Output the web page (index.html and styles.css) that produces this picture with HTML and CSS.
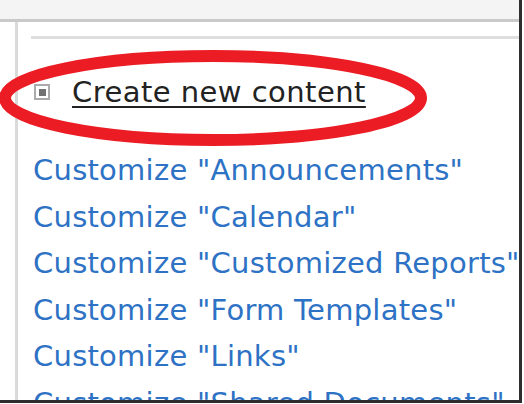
FILE: index.html
```html
<!DOCTYPE html>
<html>
<head lang="en">
    <meta charset="UTF-8">
    <title>Create new content</title>
    <link rel="stylesheet" href="styles.css">
</head>
<body>
<div class="shot">
    <div class="topbar"></div>
    <div class="main">
        <div class="rail"></div>
        <div class="content">
            <div class="rule"></div>
            <div class="heading">
                <span class="toggle"><span class="toggle-dot"></span></span>
                <a class="heading-link" href="#">Create new content</a>
            </div>
            <ul class="links">
                <li><a href="#">Customize "Announcements"</a></li>
                <li><a href="#">Customize "Calendar"</a></li>
                <li><a href="#">Customize "Customized Reports"</a></li>
                <li><a href="#">Customize "Form Templates"</a></li>
                <li><a href="#">Customize "Links"</a></li>
                <li><a href="#">Customize "Shared Documents"</a></li>
            </ul>
        </div>
    </div>
    <!--red mark drawn over the heading-->
    <svg class="mark" width="440" height="160" viewBox="0 0 440 160">
        <ellipse cx="213" cy="98" rx="208" ry="42" fill="none" stroke="#ec1c24" stroke-width="12"/>
    </svg>
</div>
</body>
</html>
```
FILE: styles.css
```css
html, body{
    margin: 0;
    padding: 0;
    background-color: #fff;
}
.shot{
    position: relative;
    width: 519px;
    height: 400px;
    overflow: hidden;
    background-color: #fff;
    border-right: 3px solid #2e2e2e;
    border-bottom: 3px solid #2e2e2e;
    font-family: "DejaVu Sans", Verdana, sans-serif;
}
.topbar{
    height: 19px;
    background-color: #f4f4f4;
    border-bottom: 3px solid #c9c9c9;
}
.main{
    display: flex;
    height: 378px;
}
.rail{
    width: 15px;
    flex: none;
    border-right: 3px solid #dadada;
}
.content{
    flex: 1;
    padding-left: 13px;
    min-width: 0;
}
.rule{
    height: 3px;
    margin-top: 14px;
    background-color: #dedede;
}
/*标题*/
.heading{
    display: flex;
    align-items: center;
    height: 40px;
    margin-top: 33px;
    line-height: 40px;
}
.toggle{
    display: flex;
    align-items: center;
    justify-content: center;
    width: 12px;
    height: 12px;
    margin-left: 3px;
    margin-top: 0;
    border: 2px solid #ababab;
    flex: none;
}
.toggle-dot{
    width: 7px;
    height: 7px;
    background-color: #727272;
}
.heading-link{
    margin-left: 22px;
    font-size: 29px;
    letter-spacing: 0.45px;
    color: #222;
    text-decoration: underline;
    text-decoration-thickness: 2px;
    text-underline-offset: 4px;
    white-space: nowrap;
}
/*链接列表*/
.links{
    list-style: none;
    margin: 35px 0 0 0;
    padding: 0 0 0 2px;
}
.links li{
    height: 46.5px;
    line-height: 46.5px;
    white-space: nowrap;
}
.links a{
    font-size: 29px;
    letter-spacing: 0.25px;
    color: #2d72c4;
    text-decoration: none;
}
.mark{
    position: absolute;
    left: 0;
    top: 0;
}
```
